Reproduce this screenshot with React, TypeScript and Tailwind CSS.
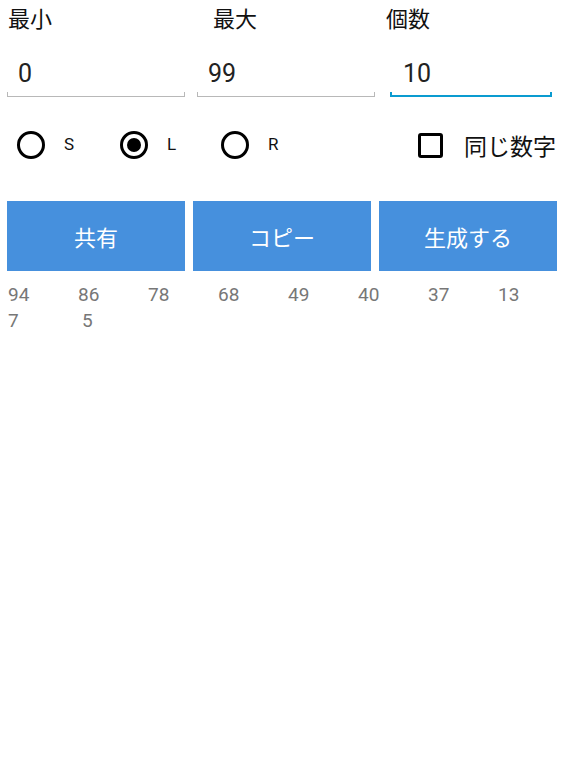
import React, { useState } from 'react';

const jp = { fontFamily: '"Noto Sans CJK JP", "Noto Sans", sans-serif' };
const rb = { fontFamily: 'Roboto, "Noto Sans CJK JP", sans-serif' };

const numbers = [94, 86, 78, 68, 49, 40, 37, 13, 7, 5];

const Field: React.FC<{ value: string; focused?: boolean; width: string; textPad: string }> = ({ value, focused, width, textPad }) => (
    <div className={`${width} relative h-[40px]`}>
        <div className={`${textPad} pt-[2px] text-[25px] leading-[30px] text-[#222]`} style={rb}>{value}</div>
        {focused ? (
            <>
                <div className="absolute left-0 right-0 bottom-0 h-[2px] bg-[#0a9bd0]" />
                <div className="absolute left-0 bottom-0 w-[2px] h-[5px] bg-[#0a9bd0]" />
                <div className="absolute right-0 bottom-0 w-[2px] h-[5px] bg-[#0a9bd0]" />
            </>
        ) : (
            <>
                <div className="absolute left-0 right-0 bottom-0 h-[1px] bg-[#b8b8b8]" />
                <div className="absolute left-0 bottom-0 w-[1px] h-[5px] bg-[#b8b8b8]" />
                <div className="absolute right-0 bottom-0 w-[1px] h-[5px] bg-[#b8b8b8]" />
            </>
        )}
    </div>
);

const Radio: React.FC<{ checked: boolean; label: string; onClick: () => void; width: string }> = ({ checked, label, onClick, width }) => (
    <button type="button" onClick={onClick} className={`${width} flex items-center`}>
        <span className="w-[28px] h-[28px] rounded-full border-[3px] border-black flex items-center justify-center">
            {checked && <span className="w-[14px] h-[14px] rounded-full bg-black" />}
        </span>
        <span className="ml-[19px] text-[17px] text-[#111]" style={rb}>{label}</span>
    </button>
);

export default function App() {
    const [mode, setMode] = useState<'S' | 'L' | 'R'>('L');
    const [same, setSame] = useState(false);

    return (
        <div className="w-[561px] h-[759px] bg-white overflow-hidden">
            <div className="flex pt-[3px] text-[22px] leading-[28px] text-[#111]" style={jp}>
                <div className="w-[213px] pl-[8px]">最小</div>
                <div className="w-[173px]">最大</div>
                <div>個数</div>
            </div>

            <div className="flex pl-[7px] mt-[26px]">
                <Field value="0" width="w-[178px]" textPad="pl-[11px]" />
                <div className="w-[12px]" />
                <Field value="99" width="w-[178px]" textPad="pl-[11px]" />
                <div className="w-[15px]" />
                <Field value="10" focused width="w-[162px]" textPad="pl-[13px]" />
            </div>

            <div className="flex items-center h-[44px] mt-[26px] pl-[17px]">
                <Radio checked={mode === 'S'} label="S" onClick={() => setMode('S')} width="w-[103px]" />
                <Radio checked={mode === 'L'} label="L" onClick={() => setMode('L')} width="w-[101px]" />
                <Radio checked={mode === 'R'} label="R" onClick={() => setMode('R')} width="w-[197px]" />
                <button type="button" onClick={() => setSame(!same)} className="flex items-center">
                    <span className={`w-[25px] h-[25px] rounded-[3px] border-[3px] border-black ${same ? 'bg-black' : ''}`} />
                    <span className="ml-[21px] text-[23px] text-[#111]" style={jp}>同じ数字</span>
                </button>
            </div>

            <div className="flex pl-[7px] mt-[34px] gap-[8px] text-white text-[22px]" style={jp}>
                <button className="w-[178px] h-[70px] bg-[#4690dd] flex items-center justify-center">共有</button>
                <button className="w-[178px] h-[70px] bg-[#4690dd] flex items-center justify-center">コピー</button>
                <button className="w-[178px] h-[70px] bg-[#4690dd] flex items-center justify-center">生成する</button>
            </div>

            <div className="grid grid-cols-[repeat(8,70px)] pl-[8px] mt-[11px] text-[19px] leading-[26px] text-[#777]" style={rb}>
                {numbers.map((n, i) => (
                    <div key={i} className={i === 9 ? 'pl-[4px]' : ''}>{n}</div>
                ))}
            </div>
        </div>
    );
}
